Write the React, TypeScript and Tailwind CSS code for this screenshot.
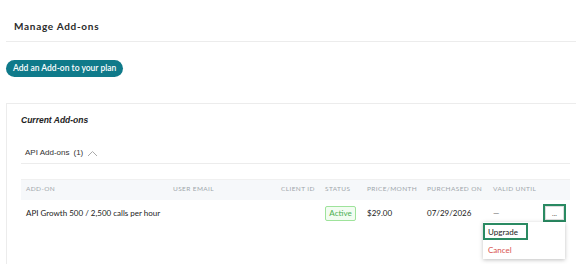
import React from "react";

export default function App() {
  const lato = { fontFamily: "Lato, 'Liberation Sans', sans-serif" };
  const arial = { fontFamily: "'Liberation Sans', Arial, sans-serif" };
  return (
    <div className="w-[576px] h-[264px] bg-white overflow-hidden text-[#222]" style={lato}>
      <div className="pl-[14px] pt-[19px] h-[41px]">
        <h1 className="text-[10px] font-bold tracking-[0.07em] leading-[14px] text-[#2b2b2b]">Manage Add-ons</h1>
      </div>
      <div className="ml-[6px] h-px bg-[#ececec]" />
      <div className="flex pl-[6px] mt-[18px]">
        <div className="h-[17px] px-[7px] rounded-full bg-[#0f7a8a] text-white text-[8.5px] font-semibold flex items-center">
          Add an Add-on to your plan
        </div>
      </div>
      <div className="ml-[6px] mt-[26px] border-l border-t border-[#ececec] h-[200px] pl-[14px] pr-[6px]">
        <div className="pt-[10px] text-[8.5px] font-bold italic leading-[12px] text-[#222]" style={arial}>
          Current Add-ons
        </div>
        <div className="mt-[19px] pl-[4px] flex items-center h-[16px] text-[8px] text-[#333]" style={arial}>
          <span>API Add-ons</span>
          <span className="ml-[4px]">(1)</span>
          <svg width="11" height="7" viewBox="0 0 11 7" className="ml-[4px]">
            <path d="M1 6 L5.5 1.5 L10 6" fill="none" stroke="#aaa" strokeWidth="1" />
          </svg>
        </div>
        <div className="mt-[2px] h-px bg-[#ececec]" />
        <div className="relative mt-[15px]">
          <div className="h-[21px] border-t border-[#f0f0f0] bg-[#f6f8fa] flex items-start pt-[5px] leading-[8px] text-[6.5px] tracking-[0.06em] text-[#a0a6ab] uppercase whitespace-nowrap">
            <div className="w-[152px] pl-[5px]">Add-on</div>
            <div className="w-[108px]">User Email</div>
            <div className="w-[44px]">Client ID</div>
            <div className="w-[42px]">Status</div>
            <div className="w-[60px]">Price/Month</div>
            <div className="w-[66px]">Purchased On</div>
            <div className="w-[50px]">Valid Until</div>
          </div>
          <div className="h-[26px] flex items-center text-[8px] text-[#222] whitespace-nowrap">
            <div className="w-[152px] pl-[5px]">API Growth 500 / 2,500 calls per hour</div>
            <div className="w-[108px]" />
            <div className="w-[44px]" />
            <div className="w-[42px]">
              <span className="flex items-center w-[31px] justify-center h-[15px] border border-[#9ee39b] bg-[#f2fcf1] text-[#4caf50] text-[8px] rounded-[2px]">
                Active
              </span>
            </div>
            <div className="w-[60px]">$29.00</div>
            <div className="w-[66px]">07/29/2026</div>
            <div className="w-[50px] text-[#666]">—</div>
            <div className="flex-1 flex justify-end pr-[4px]">
              <div className="w-[23px] h-[18px] border-2 border-[#2a8a62] bg-white flex items-center justify-center text-[7px] leading-none text-[#555] shadow-[inset_0_0_0_1px_#ddd]">
                ...
              </div>
            </div>
          </div>
          <div className="absolute left-[462px] top-[43px] w-[82px] pt-px bg-white shadow-[0_1px_4px_rgba(0,0,0,0.25)] text-[8px] whitespace-nowrap">
            <div className="h-[17px] w-[45px] border-2 border-[#2a8a62] pl-[3px] flex items-center text-[#222]">Upgrade</div>
            <div className="h-[19px] pl-[5px] flex items-center text-[#d9534f]">Cancel</div>
          </div>
        </div>
      </div>
    </div>
  );
}
